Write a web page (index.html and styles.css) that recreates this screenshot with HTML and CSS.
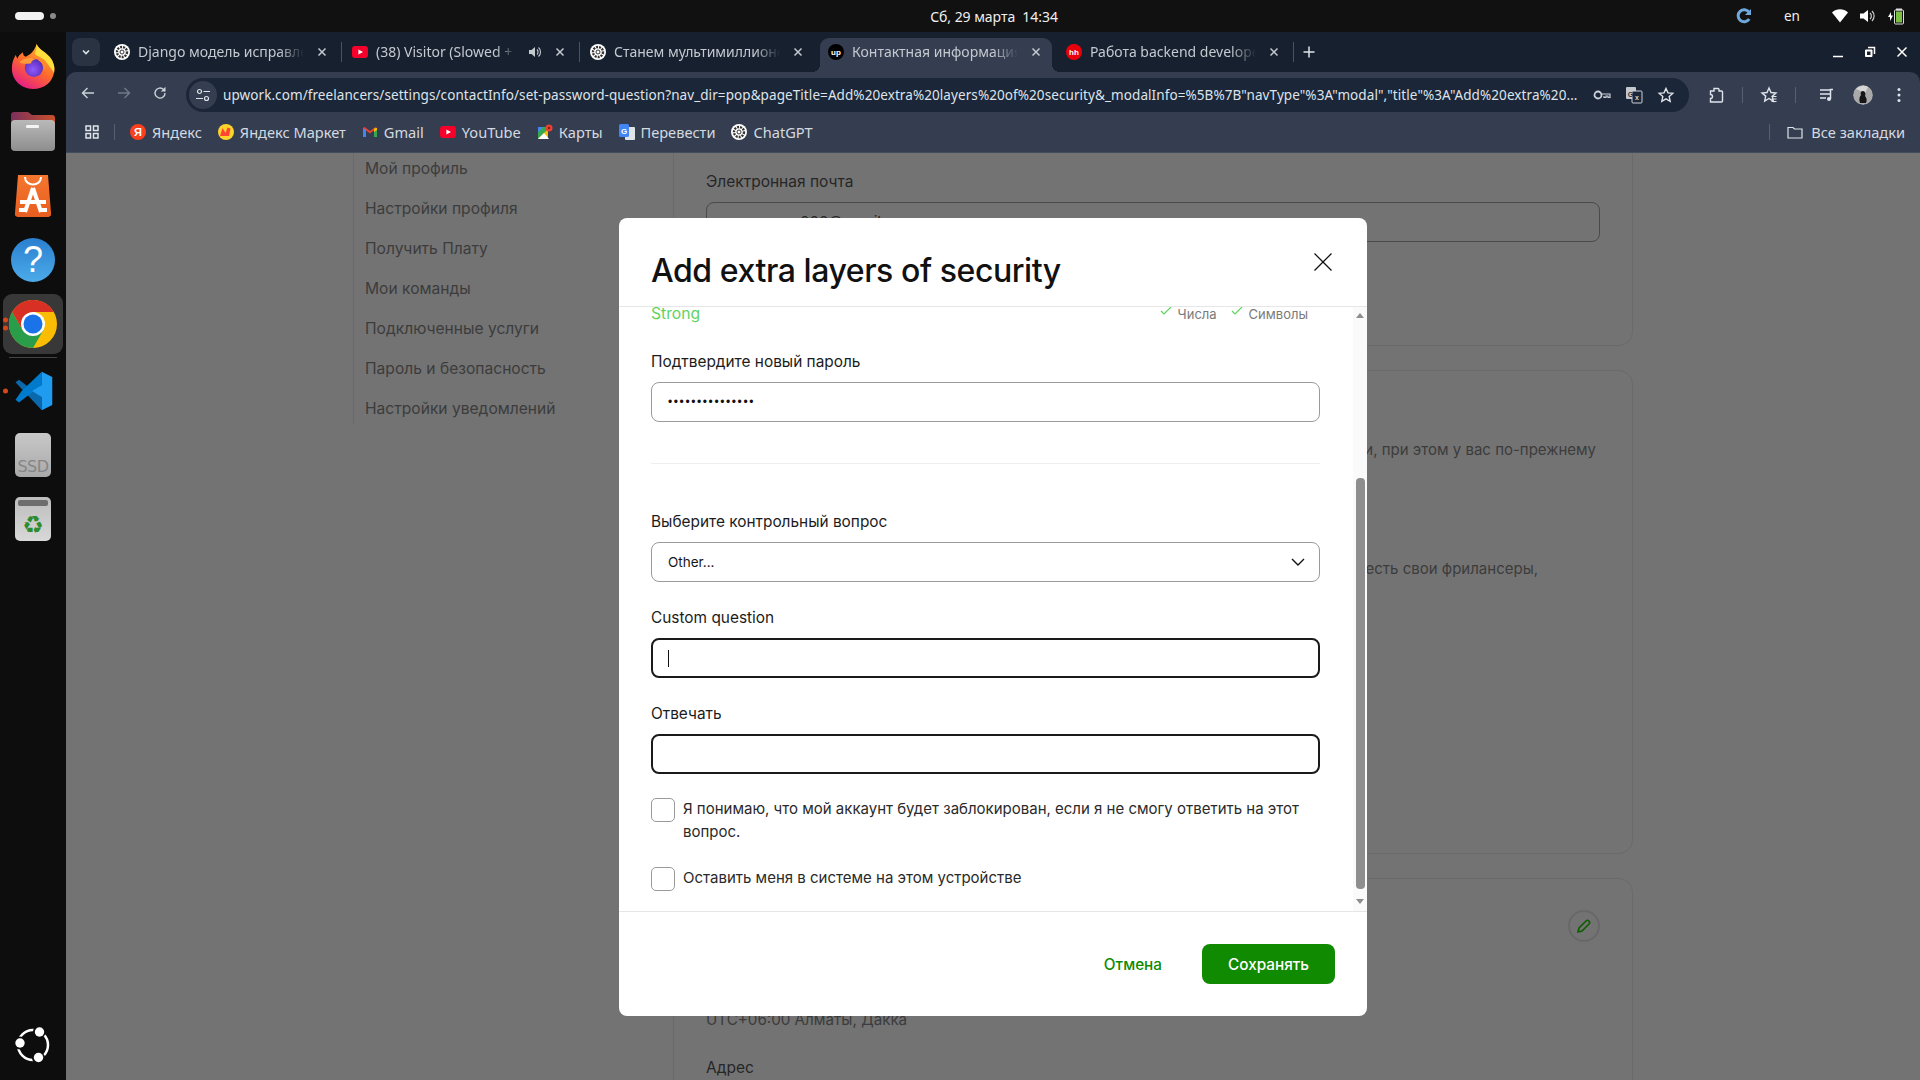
FILE: index.html
```html
<!DOCTYPE html>
<html lang="ru">
<head>
<meta charset="utf-8">
<title>Контактная информация</title>
<link rel="stylesheet" href="styles.css">
</head>
<body>
<svg class="sprite" aria-hidden="true">
  <defs>
    <symbol id="i-gpt" viewBox="0 0 16 16">
      <circle cx="8" cy="8" r="8" fill="#fff"/>
      <circle cx="8" cy="8" r="5" fill="none" stroke="#333" stroke-width="2.4" stroke-dasharray="2 1"/>
      <circle cx="8" cy="8" r="2" fill="none" stroke="#333" stroke-width="1"/>
    </symbol>
    <symbol id="i-yt" viewBox="0 0 16 16">
      <rect y="2" width="16" height="12" rx="3" fill="#f5002b"/>
      <path d="M6.4 5.4 11 8l-4.6 2.6z" fill="#fff"/>
    </symbol>
    <symbol id="i-x" viewBox="0 0 16 16">
      <path d="M4.5 4.5l7 7M11.5 4.5l-7 7" fill="none" stroke="currentColor" stroke-width="1.5"/>
    </symbol>
  </defs>
</svg>

<header class="topbar">
  <div class="tb-left"><span class="pill"></span><span class="pill-dot"></span></div>
  <div class="tb-clock">Сб, 29 марта&nbsp;&nbsp;14:34</div>
  <div class="tb-right">
    <svg class="tb-reload" width="16" height="16" viewBox="0 0 16 16"><path d="M13 4.2A6 6 0 1 0 13.2 11" fill="none" stroke="#6fa8dc" stroke-width="3"/><path d="M15 1v6H9z" fill="#6fa8dc"/></svg>
    <span class="tb-lang">en</span>
    <svg class="tb-wifi" width="16" height="14" viewBox="0 0 16 14"><path d="M0 3.500C4.500-.8 11.500-.8 16 3.500L8 13.500z" fill="#fff"/></svg>
    <svg class="tb-vol" width="16" height="14" viewBox="0 0 16 14"><path d="M0 4.500h3.500L8 1v12L3.500 9.500H0z" fill="#fff"/><path d="M10 4a4 4 0 0 1 0 6M12 2a7 7 0 0 1 0 10" fill="none" stroke="#ccc" stroke-width="1.200"/></svg>
    <svg class="tb-bat" width="16" height="18" viewBox="0 0 16 18"><path d="M0 10l3-5v3.500h2L2 14v-4z" fill="#fff"/><rect x="6.500" y="3" width="9" height="14" rx="1" fill="none" stroke="#ddd"/><rect x="8" y="1.500" width="6" height="2" fill="#ddd"/><rect x="8" y="4.500" width="6" height="11" fill="#7bc043"/></svg>
  </div>
</header>

<div class="desk">
  <nav class="dock">
    <div class="dock-item dock-first">
      <svg width="44" height="46" viewBox="0 0 48 50">
        <defs>
          <linearGradient id="ff1" x1="0.8" y1="0" x2="0.2" y2="1"><stop offset="0" stop-color="#ffc22e"/><stop offset=".5" stop-color="#ff6a2b"/><stop offset="1" stop-color="#e3158f"/></linearGradient>
          <radialGradient id="ff2" cx=".45" cy=".6" r=".6"><stop offset="0" stop-color="#8f5bff"/><stop offset="1" stop-color="#5b2bb8"/></radialGradient>
        </defs>
        <path d="M28 1c2 6 9 8 14 14 5 6 6 12 5 17-2 11-11 18-23 18C11 50 1 40 1 28c0-7 2-11 4-15l2 4c1-3 3-5 6-7 0 3 1 4 3 5 3-2 9-4 12-14z" fill="url(#ff1)"/>
        <path d="M28 1c2 6 9 8 14 14 5 6 6 12 5 17l-9-12c-3-4-9-5-12-8 1-3 2-7 2-11z" fill="#ffdd3a"/>
        <circle cx="25" cy="27" r="10" fill="url(#ff2)"/>
        <path d="M9 21c5-5 13-6 18-3-3 0-5 2-5 4-4 1-9 1-13-1z" fill="#ff9b3a"/>
        <path d="M32 16c4 3 6 8 5 14-1-5-3-9-7-11z" fill="#ff8a2c"/>
      </svg>
    </div>
    <div class="dock-item dock-files">
      <svg width="44" height="40" viewBox="0 0 44 40">
        <defs><linearGradient id="fo1" x1="0" y1="0" x2="1" y2="0"><stop offset="0" stop-color="#7a2f5c"/><stop offset="1" stop-color="#c9502a"/></linearGradient>
        <linearGradient id="fo2" x1="0" y1="0" x2="0" y2="1"><stop offset="0" stop-color="#b9b9b9"/><stop offset="1" stop-color="#8e8e8e"/></linearGradient></defs>
        <path d="M0 18V4a3 3 0 0 1 3-3h14l4 3h20a3 3 0 0 1 3 3v11z" fill="url(#fo1)"/>
        <rect y="9" width="44" height="31" rx="4" fill="url(#fo2)"/>
        <rect x="15" y="14" width="13" height="3" rx="1" fill="#f3f3f3"/>
      </svg>
    </div>
    <div class="dock-item">
      <svg width="36" height="42" viewBox="0 0 36 42">
        <defs><linearGradient id="ap1" x1="0" y1="0" x2="0" y2="1"><stop offset="0" stop-color="#f5772f"/><stop offset="1" stop-color="#e85d20"/></linearGradient></defs>
        <path d="M3 0h30l3 38a3 3 0 0 1-3 4H3a3 3 0 0 1-3-4z" fill="url(#ap1)"/>
        <path d="M10 2c0 10 16 10 16 0" fill="none" stroke="#fff" stroke-width="2"/>
        <path d="M18 13l8 24M18 13l-8 24M5 27h26M4 35h8M24 35h8" fill="none" stroke="#fff" stroke-width="4"/>
      </svg>
    </div>
    <div class="dock-item">
      <svg width="44" height="44" viewBox="0 0 44 44">
        <defs><linearGradient id="he1" x1="0" y1="0" x2="0" y2="1"><stop offset="0" stop-color="#2a7fcf"/><stop offset="1" stop-color="#4cabe9"/></linearGradient></defs>
        <circle cx="22" cy="22" r="22" fill="url(#he1)"/>
        <text x="22" y="34" class="help-q">?</text>
      </svg>
    </div>
    <div class="dock-item dock-active">
      <span class="run-dots"><i></i><i></i></span>
      <svg width="48" height="48" viewBox="0 0 48 48">
        <circle cx="24" cy="24" r="24" fill="#fbbc04"/>
        <path d="M3.200 12A24 24 0 0 0 24 48L34.400 30H13.600z" fill="#2a9d4b"/>
        <path d="M3.200 12A24 24 0 0 1 44.800 12H24L13.600 30z" fill="#d93025"/>
        <circle cx="24" cy="24" r="12" fill="#fff"/>
        <circle cx="24" cy="24" r="9.500" fill="#1a73e8"/>
      </svg>
    </div>
    <div class="dock-sep"></div>
    <div class="dock-item">
      <span class="run-dots"><i></i></span>
      <svg width="42" height="42" viewBox="0 0 48 48">
        <path d="M4 14l4-3 26 20v15z" fill="#0a68ad"/>
        <path d="M34 2 11 24 4 34l4 3 26-20z" fill="#007acc"/>
        <path d="M34 2l12 6v32l-12 6V31l-11-7 11-7z" fill="#1f9cf0"/>
      </svg>
    </div>
    <div class="dock-item">
      <div class="ssd">SSD</div>
    </div>
    <div class="dock-item">
      <div class="trash"><span class="trash-lid"></span><span class="trash-sign">♻</span></div>
    </div>
    <div class="dock-ubuntu">
      <svg width="36" height="36" viewBox="0 0 36 36">
        <circle cx="18" cy="18" r="15" fill="none" stroke="#fff" stroke-width="2.500"/>
        <circle cx="24.500" cy="4.500" r="6.500" fill="#0d0d0d"/><circle cx="5" cy="16" r="6.500" fill="#0d0d0d"/><circle cx="23.500" cy="31" r="6.500" fill="#0d0d0d"/>
        <circle cx="24.500" cy="5" r="4.700" fill="#fff"/><circle cx="5" cy="16" r="4.700" fill="#fff"/><circle cx="23.500" cy="30.500" r="4.700" fill="#fff"/>
      </svg>
    </div>
  </nav>

  <div class="browser">
    <div class="tabstrip">
      <button class="tab-menu"><svg width="12" height="12" viewBox="0 0 12 12"><path d="M3 4.500l3 3 3-3" fill="none" stroke="#dfe3ea" stroke-width="1.600"/></svg></button>
      <div class="tab"><svg class="fav"><use href="#i-gpt"/></svg><span class="tab-title">Django модель исправление</span><svg class="tab-x"><use href="#i-x"/></svg></div>
      <i class="tab-sep"></i>
      <div class="tab"><svg class="fav"><use href="#i-yt"/></svg><span class="tab-title">(38) Visitor (Slowed + Reverb)</span>
        <svg class="tab-audio" viewBox="0 0 16 16"><path d="M2 6h2.500L8 3v10L4.500 10H2z" fill="#c5c9d0"/><path d="M10 5.500a3.500 3.500 0 0 1 0 5M11.500 3.500a6 6 0 0 1 0 9" fill="none" stroke="#c5c9d0" stroke-width="1.100"/></svg>
        <svg class="tab-x"><use href="#i-x"/></svg></div>
      <i class="tab-sep"></i>
      <div class="tab"><svg class="fav"><use href="#i-gpt"/></svg><span class="tab-title">Станем мультимиллионерами</span><svg class="tab-x"><use href="#i-x"/></svg></div>
      <i class="tab-sep tab-sep-off"></i>
      <div class="tab tab-active"><svg class="fav" viewBox="0 0 16 16"><circle cx="8" cy="8" r="8" fill="#000"/><text x="8" y="10.500" class="fav-up">up</text></svg><span class="tab-title">Контактная информация</span><svg class="tab-x"><use href="#i-x"/></svg></div>
      <i class="tab-sep tab-sep-off"></i>
      <div class="tab"><svg class="fav" viewBox="0 0 16 16"><circle cx="8" cy="8" r="8" fill="#e8000d"/><text x="8" y="10.800" class="fav-hh">hh</text></svg><span class="tab-title">Работа backend developer</span><svg class="tab-x"><use href="#i-x"/></svg></div>
      <i class="tab-sep"></i>
      <svg class="tab-plus" viewBox="0 0 16 16"><path d="M8 2.500v11M2.500 8h11" stroke="#dfe3ea" stroke-width="1.500"/></svg>
      <div class="win-ctrls">
        <svg viewBox="0 0 12 12"><path d="M1 10.500h10" stroke="#fff" stroke-width="1.500"/></svg>
        <svg viewBox="0 0 12 12"><path d="M1.500 4h6.500v6.500H1.500z" fill="#fff" stroke="#fff" stroke-width="1"/><rect x="3" y="5.500" width="3.500" height="3.500" fill="#17202f"/><path d="M4 1.500h6.500V8" fill="none" stroke="#fff" stroke-width="1.500"/></svg>
        <svg viewBox="0 0 12 12"><path d="M1.500 1.500l9 9M10.500 1.500l-9 9" stroke="#fff" stroke-width="1.500"/></svg>
      </div>
    </div>

    <div class="toolbar">
      <svg class="nav-ic" viewBox="0 0 16 16"><path d="M14 8H2.500M7.500 3l-5 5 5 5" fill="none" stroke="#ccd1d9" stroke-width="1.400"/></svg>
      <svg class="nav-ic" viewBox="0 0 16 16"><path d="M2 8h11.500M8.500 3l5 5-5 5" fill="none" stroke="#727a88" stroke-width="1.400"/></svg>
      <svg class="nav-ic" viewBox="0 0 16 16"><path d="M13 8a5 5 0 1 1-1.500-3.500L13 6" fill="none" stroke="#ccd1d9" stroke-width="1.400"/><path d="M13.500 1.800v4.700H8.800z" fill="#ccd1d9"/></svg>
      <div class="omnibox">
        <span class="site-chip"><svg width="16" height="16" viewBox="0 0 16 16"><circle cx="4.500" cy="4.500" r="2" fill="none" stroke="#dfe3ea" stroke-width="1.200"/><path d="M8.500 4.500H15M1 11.500h7" stroke="#dfe3ea" stroke-width="1.200"/><circle cx="11.500" cy="11.500" r="2" fill="none" stroke="#dfe3ea" stroke-width="1.200"/></svg></span>
        <span class="url">upwork.com/freelancers/settings/contactInfo/set-password-question?nav_dir=pop&amp;pageTitle=Add%20extra%20layers%20of%20security&amp;_modalInfo=%5B%7B"navType"%3A"modal","title"%3A"Add%20extra%20...</span>
        <svg class="omni-ic" viewBox="0 0 18 16"><circle cx="5" cy="8" r="3.500" fill="none" stroke="#ccd1d9" stroke-width="1.800"/><path d="M8.500 7H17v3.500h-2V9h-2v1.500h-2V9" fill="none" stroke="#ccd1d9" stroke-width="1.200"/></svg>
        <svg class="omni-ic" viewBox="0 0 18 18"><rect x="1" y="1" width="10" height="12" rx="1" fill="#c3c7ce"/><rect x="7" y="5" width="10" height="12" rx="1" fill="#1b2638" stroke="#ccd1d9"/><text x="5.500" y="10.500" class="tr-g">G</text><text x="12" y="14" class="tr-x">x</text></svg>
        <svg class="omni-ic" viewBox="0 0 18 18"><path d="M9 2.500l2 4.400 4.800.5-3.600 3.200 1 4.700L9 12.900l-4.200 2.400 1-4.700L2.200 7.400 7 6.900z" fill="none" stroke="#dfe3ea" stroke-width="1.400"/></svg>
      </div>
      <div class="tools">
        <svg class="tool-ic" viewBox="0 0 18 18"><path d="M7 2.500h4a1 1 0 0 1 1 1V5h2.500a1 1 0 0 1 1 1v9a1 1 0 0 1-1 1H3.500v-3.500a2 2 0 0 0 0-4V5H7z" fill="none" stroke="#dfe3ea" stroke-width="1.400"/></svg>
        <i class="tool-sep"></i>
        <svg class="tool-ic" viewBox="0 0 18 18"><path d="M9 2l2 4.500 5 .5-3.700 3.300 1 4.900L9 12.500 4.700 15l1-4.900L2 7l5-.5z" fill="none" stroke="#dfe3ea" stroke-width="1.400"/><path d="M11.500 10.500h5M11.500 13h5M11.500 15.500h5" stroke="#dfe3ea" stroke-width="1.100"/></svg>
        <i class="tool-sep"></i>
        <svg class="tool-ic tool-music" viewBox="0 0 18 18"><path d="M2 4h10M2 8h10M2 12h6" stroke="#dfe3ea" stroke-width="1.400"/><path d="M15 3.500h-2.500V13" fill="none" stroke="#dfe3ea" stroke-width="1.500"/><circle cx="11" cy="13" r="2" fill="#dfe3ea"/></svg>
        <svg class="avatar" viewBox="0 0 20 20"><circle cx="10" cy="10" r="10" fill="#a9a9a9"/><path d="M3 4a10 10 0 0 1 12-2L12 8z" fill="#d6d6d6"/><path d="M7 18c-1-3-1-6 1-8-1-2 0-4 2-4s3 3 2 5c2 2 2 5 1 7z" fill="#161616"/></svg>
        <svg class="tool-ic tool-more" viewBox="0 0 18 18"><circle cx="9" cy="3.500" r="1.500" fill="#dfe3ea"/><circle cx="9" cy="9" r="1.500" fill="#dfe3ea"/><circle cx="9" cy="14.500" r="1.500" fill="#dfe3ea"/></svg>
      </div>
    </div>

    <div class="bookmarks">
      <svg class="bm-grid" viewBox="0 0 16 16"><path d="M2 2h4.500v4.500H2zM9.500 2H14v4.500H9.500zM2 9.500h4.500V14H2zM9.500 9.500H14V14H9.500z" fill="none" stroke="#dfe3ea" stroke-width="1.500"/></svg>
      <i class="bm-sep"></i>
      <div class="bm"><svg class="fav" viewBox="0 0 16 16"><circle cx="8" cy="8" r="8" fill="#fc3f1d"/><text x="8" y="12" class="fav-ya">Я</text></svg><span>Яндекс</span></div>
      <div class="bm"><svg class="fav" viewBox="0 0 16 16"><circle cx="8" cy="8" r="8" fill="#fed42b"/><path d="M2 12 4.500 4l3 5 2-5.500 3 1L11 12z" fill="#f43"/></svg><span>Яндекс Маркет</span></div>
      <div class="bm"><svg class="fav" viewBox="0 0 16 16"><path d="M1 13V4l3 .5V13z" fill="#4285f4"/><path d="M12 13V4.500l3-.5v9z" fill="#34a853"/><path d="M1 4l7 5.500L15 4l-1.500-1L8 7 2.500 3z" fill="#ea4335"/><path d="M12 4.500 15 4v2l-3 2z" fill="#fbbc04"/></svg><span>Gmail</span></div>
      <div class="bm"><svg class="fav"><use href="#i-yt"/></svg><span>YouTube</span></div>
      <div class="bm"><svg class="fav" viewBox="0 0 16 16"><path d="M1 3h10v12H1z" fill="#34a853"/><path d="M1 15 11 5v10z" fill="#fbbc04"/><path d="M1 15 7 9l5 6z" fill="#fff"/><path d="M1 3h5L1 8z" fill="#4285f4"/><circle cx="12" cy="4" r="3.500" fill="#ea4335"/><circle cx="12" cy="4" r="1.200" fill="#8c1b12"/></svg><span>Карты</span></div>
      <div class="bm"><svg class="fav" viewBox="0 0 16 16"><rect x="6" y="3" width="10" height="13" rx="1" fill="#dfe3ea"/><rect width="10" height="13" rx="1.500" fill="#4285f4"/><text x="5" y="10" class="fav-g">G</text></svg><span>Перевести</span></div>
      <div class="bm"><svg class="fav"><use href="#i-gpt"/></svg><span>ChatGPT</span></div>
      <div class="bm-all">
        <i class="bm-sep"></i>
        <svg class="fav" viewBox="0 0 16 16"><path d="M1 3.500h5l1.500 1.500H15v9H1z" fill="none" stroke="#dfe3ea" stroke-width="1.200"/></svg>
        <span>Все закладки</span>
      </div>
    </div>

    <main class="page">
      <aside class="side">
        <ul class="side-list">
          <li>Мой профиль</li>
          <li>Настройки профиля</li>
          <li>Получить Плату</li>
          <li>Мои команды</li>
          <li>Подключенные услуги</li>
          <li>Пароль и безопасность</li>
          <li>Настройки уведомлений</li>
        </ul>
      </aside>
      <section class="cards">
        <div class="card card-one">
          <div class="c-label">Электронная почта</div>
          <div class="c-input">000@gmail</div>
        </div>
        <div class="card card-two">
          <p class="c-line c-line-a">и, при этом у вас по-прежнему</p>
          <p class="c-line c-line-b">есть свои фрилансеры,</p>
        </div>
        <div class="card card-three">
          <div class="c-edit"><span class="edit-btn"><svg width="16" height="16" viewBox="0 0 16 16"><path d="M2 14l1-4 7-7a1.800 1.800 0 0 1 3 3l-7 7z" fill="none" stroke="#0f5c00" stroke-width="1.600"/></svg></span></div>
          <div class="c-text">UTC+06:00 Алматы, Дакка</div>
          <div class="c-label c-addr">Адрес</div>
        </div>
      </section>

      <div class="modal">
        <div class="m-head">
          <h1 class="m-title">Add extra layers of security</h1>
          <svg class="m-close" width="20" height="20" viewBox="0 0 20 20"><path d="M1.500 1.500l17 17M18.500 1.500l-17 17" stroke="#111" stroke-width="1.300"/></svg>
        </div>
        <div class="m-body">
          <div class="m-content">
            <div class="strength">
              <span class="strong">Strong</span>
              <span class="rule"><svg class="tick" width="12" height="10" viewBox="0 0 12 10"><path d="M1 5l3 3 7-7" fill="none" stroke="#5fd35f" stroke-width="1.200"/></svg>Числа</span>
              <span class="rule"><svg class="tick" width="12" height="10" viewBox="0 0 12 10"><path d="M1 5l3 3 7-7" fill="none" stroke="#5fd35f" stroke-width="1.200"/></svg>Символы</span>
            </div>
            <label class="f-label f-first">Подтвердите новый пароль</label>
            <div class="field"><span class="dots">•••••••••••••••</span></div>
            <hr class="divider">
            <label class="f-label f-sec">Выберите контрольный вопрос</label>
            <div class="field field-select"><span class="f-value">Other...</span><svg width="14" height="8" viewBox="0 0 14 8"><path d="M1 1l6 6 6-6" fill="none" stroke="#111" stroke-width="1.400"/></svg></div>
            <label class="f-label">Custom question</label>
            <div class="field field-focus"><span class="caret"></span></div>
            <label class="f-label">Отвечать</label>
            <div class="field field-focus"></div>
            <div class="check check-first"><span class="box"></span><span class="check-text">Я понимаю, что мой аккаунт будет заблокирован, если я не смогу ответить на этот вопрос.</span></div>
            <div class="check"><span class="box"></span><span class="check-text">Оставить меня в системе на этом устройстве</span></div>
          </div>
          <div class="scrollbar">
            <span class="arrow arrow-up"></span>
            <span class="thumb"></span>
            <span class="arrow arrow-down"></span>
          </div>
        </div>
        <div class="m-foot">
          <span class="btn-link">Отмена</span>
          <span class="btn-primary">Сохранять</span>
        </div>
      </div>
    </main>
  </div>
</div>
</body>
</html>
```
FILE: styles.css
```css
* { box-sizing: border-box; }
html, body { margin: 0; height: 100%; }
body {
  width: 1920px; height: 1080px; overflow: hidden; background: #111;
  display: flex; flex-direction: column;
  font-family: "Noto Sans", sans-serif;
}
.sprite { position: absolute; width: 0; height: 0; }
i { font-style: normal; display: block; }

/* top bar */
.topbar { height: 32px; background: #111; display: grid; grid-template-columns: 1fr auto 1fr; align-items: center; color: #eee; flex: none; }
.tb-left { display: flex; align-items: center; padding-left: 15px; gap: 6px; }
.pill { width: 29px; height: 8px; border-radius: 4px; background: #f2f2f2; }
.pill-dot { width: 6px; height: 6px; border-radius: 50%; background: #8a8a8a; }
.tb-clock { font-size: 14px; letter-spacing: -.05px; margin-left: 68px; }
.tb-right { display: flex; align-items: center; justify-content: flex-end; padding-right: 16px; }
.tb-lang { font-size: 13.5px; margin-left: 32px; width: 16px; }
.tb-wifi { margin-left: 32px; }
.tb-vol { margin-left: 12px; }
.tb-bat { margin-left: 12px; }

.desk { flex: 1; display: flex; min-height: 0; }

/* dock */
.dock { width: 66px; flex: none; background: #0d0d0d; display: flex; flex-direction: column; align-items: center; padding-top: 3px; }
.dock-item { width: 60px; height: 64px; display: flex; align-items: center; justify-content: center; position: relative; flex: none; }
.dock-first { height: 65px; }
.dock-first svg { margin-top: -3px; }
.dock-files svg { margin-top: -2px; }
.dock-active { background: #383838; border-radius: 9px; height: 60px; margin: 2px 0; }
.dock-sep { width: 48px; height: 1px; background: #444; margin: 1px 0; flex: none; }
.run-dots { position: absolute; left: 0; top: 50%; transform: translateY(-50%); display: flex; flex-direction: column; gap: 3px; }
.run-dots i { width: 5px; height: 5px; border-radius: 50%; background: #d5481a; }
.help-q { font: 400 36px "Liberation Sans", sans-serif; fill: #fff; text-anchor: middle; }
.ssd { width: 36px; height: 44px; border-radius: 5px; background: linear-gradient(#c8c8c8, #a9a9a9); color: #868686; font: 400 16px "DejaVu Sans", sans-serif; display: flex; align-items: flex-end; justify-content: center; padding-bottom: 1px; letter-spacing: -.5px; }
.trash { width: 36px; height: 44px; border-radius: 5px; background: linear-gradient(#bdbdbd, #d8d8d8); display: flex; flex-direction: column; align-items: center; padding-top: 3px; }
.trash-lid { width: 30px; height: 6px; background: #6d6d6d; border-radius: 2px; }
.trash-sign { color: #2e8b2e; font: 24px/28px "DejaVu Sans", sans-serif; margin-top: 5px; }
.dock-ubuntu { margin-top: auto; margin-bottom: 17px; height: 36px; }

/* browser chrome */
.browser { flex: 1; min-width: 0; display: flex; flex-direction: column; background: #17202f; }
.tabstrip { height: 40px; flex: none; display: flex; align-items: flex-start; padding: 6px 0 0 6px; color: #c5c9d0; }
.tab-menu { width: 28px; height: 28px; margin-right: 6px; border: 0; padding: 0; border-radius: 8px; background: #2a3342; display: flex; align-items: center; justify-content: center; }
.tab { width: 232px; height: 34px; display: flex; align-items: center; padding: 0 8px 6px; font-size: 14px; position: relative; flex: none; }
.tab-active { background: #343e50; border-radius: 9px 9px 0 0; }
.tab-active::before, .tab-active::after { content: ""; position: absolute; bottom: 0; width: 8px; height: 8px; }
.tab-active::before { left: -8px; background: radial-gradient(circle at 0 0, transparent 8px, #343e50 8px); }
.tab-active::after { right: -8px; background: radial-gradient(circle at 100% 0, transparent 8px, #343e50 8px); }
.fav { width: 16px; height: 16px; flex: none; }
.tab-title { flex: 1; min-width: 0; margin: -2px 10px 0 8px; white-space: nowrap; overflow: hidden; -webkit-mask-image: linear-gradient(90deg, #000 85%, transparent); mask-image: linear-gradient(90deg, #000 85%, transparent); }
.tab-x { width: 16px; height: 16px; flex: none; }
.tab-audio { width: 16px; height: 16px; flex: none; margin-right: 9px; }
.tab-sep { width: 1px; height: 20px; background: #4a5364; margin: 4px 2.5px 0; flex: none; }
.tab-sep-off { background: transparent; }
.tab-plus { width: 16px; height: 16px; margin: 6px 0 0 5px; flex: none; }
.win-ctrls { margin-left: auto; display: flex; gap: 20px; padding: 8px 12px 0 0; }
.win-ctrls svg { width: 12px; height: 12px; }
.fav-up { font: 700 8px "Liberation Sans", sans-serif; fill: #fff; text-anchor: middle; }
.fav-hh { font: 700 8px "Liberation Sans", sans-serif; fill: #fff; text-anchor: middle; }
.fav-ya { font: 700 11px "Liberation Sans", sans-serif; fill: #fff; text-anchor: middle; }
.fav-g { font: 700 8px "Liberation Sans", sans-serif; fill: #fff; text-anchor: middle; }
.tr-g { font: 700 7px "Liberation Sans", sans-serif; fill: #333; text-anchor: middle; }
.tr-x { font: 700 7px "Liberation Sans", sans-serif; fill: #ccd1d9; text-anchor: middle; }

.toolbar { height: 41px; flex: none; background: #343e50; border-radius: 10px 10px 0 0; display: flex; align-items: center; padding: 0 0 0 14px; }
.nav-ic { width: 16px; height: 16px; margin-right: 20px; flex: none; }
.nav-ic:nth-child(3) { margin-right: 18px; }
.omnibox { width: 1503px; height: 34px; margin: 4px 0 0 0; border-radius: 17px; background: #1b2638; display: flex; align-items: center; padding-left: 3px; flex: none; }
.site-chip { width: 28px; height: 28px; border-radius: 50%; background: #343e50; display: flex; align-items: center; justify-content: center; flex: none; }
.url { margin-left: 6px; width: 1355px; font-size: 13.5px; color: #dfe3ea; white-space: nowrap; overflow: hidden; flex: none; letter-spacing: .08px; }
.omni-ic { width: 18px; height: 18px; flex: none; margin-left: 14px; }
.url + .omni-ic { margin-left: 15px; }
.tools { display: flex; align-items: center; margin-top: 4px; margin-left: 18px; }
.tool-ic { width: 18px; height: 18px; flex: none; }
.tool-sep { width: 1px; height: 16px; background: #566072; margin: 0 17px; flex: none; }
.tool-music { margin-left: 5px; }
.avatar { width: 20px; height: 20px; border-radius: 50%; margin-left: 17px; flex: none; }
.tool-more { margin-left: 17px; }

.bookmarks { height: 40px; flex: none; background: #343e50; border-bottom: 1px solid #424c60; display: flex; align-items: center; padding: 0 0 2px 18px; color: #d5d9e0; font-size: 14.6px; }
.bm-grid { width: 16px; height: 16px; flex: none; }
.bm-sep { width: 1px; height: 16px; background: #566072; margin: 0 15px 0 14px; flex: none; }
.bm { display: flex; align-items: center; gap: 6px; margin-right: 16px; white-space: nowrap; }
.bm-all { margin-left: auto; display: flex; align-items: center; gap: 8px; padding-right: 15px; white-space: nowrap; }
.bm-all .bm-sep { margin: 0 9px 0 0; }

/* page behind the dialog */
.page { flex: 1; min-height: 0; background: #737373; position: relative; overflow: hidden; display: flex; padding-left: 287px; font-family: Inter, "Liberation Sans", sans-serif; color: #3c3c3c; }
.side { width: 320px; height: 272px; border-left: 1px solid #6a6a6a; padding-left: 11px; flex: none; }
.side-list { list-style: none; margin: -4px 0 0; padding: 0; font-size: 15.6px; }
.side-list li { height: 40px; line-height: 40px; white-space: nowrap; }
.cards { width: 960px; display: flex; flex-direction: column; gap: 24px; flex: none; }
.card { border: 1px solid #6a6a6a; border-radius: 14px; padding: 0 32px; flex: none; }
.card-one { height: 253px; margin-top: -60px; padding-top: 76px; }
.c-label { font-size: 15.5px; line-height: 24px; color: #262626; }
.c-input { height: 40px; margin-top: 8px; border: 1px solid #4a4a4a; border-radius: 8px; padding: 7px 0 0 93px; color: #262626; font-size: 15px; line-height: 24px; }
.card-two { height: 484px; padding-top: 67px; }
.c-line { margin: 0; font-size: 15px; line-height: 24px; text-align: right; white-space: nowrap; }
.c-line-a { padding-right: 4px; }
.c-line-b { margin-top: 95px; padding-right: 62px; }
.card-three { height: 300px; padding-top: 31px; }
.c-edit { display: flex; justify-content: flex-end; }
.edit-btn { width: 32px; height: 32px; border-radius: 50%; border: 2px solid #686868; display: flex; align-items: center; justify-content: center; }
.c-text { margin-top: 66px; font-size: 15.2px; line-height: 24px; }
.c-addr { margin-top: 24px; }

/* dialog */
.modal { position: absolute; left: 553px; top: 65px; width: 748px; height: 798px; background: #fff; border-radius: 8px; display: flex; flex-direction: column; color: #181818; overflow: hidden; font-family: Inter, "Liberation Sans", sans-serif; }
.m-head { height: 89px; flex: none; border-bottom: 1px solid #e6e6e6; display: flex; justify-content: space-between; align-items: flex-start; padding: 33px 34px 0 32px; }
.m-title { margin: 0; font-size: 32px; line-height: 40px; font-weight: 500; letter-spacing: -.43px; color: #111; }
.m-close { margin-top: 1px; }
.m-body { flex: 1; min-height: 0; position: relative; overflow: hidden; }
.m-content { padding: 0 47px 0 32px; width: 748px; }
.strength { height: 15px; padding-bottom: 2px; display: flex; align-items: center; font-size: 13px; color: #7a7a7a; }
.strong { color: #5fd35f; font-size: 15.7px; margin-right: auto; }
.rule { display: flex; align-items: center; margin-right: 14px; margin-top: 1px; }
.rule:last-child { margin-right: 12px; }
.tick { margin-right: 6px; margin-top: -6px; }
.f-label { display: block; font-size: 15.4px; line-height: 24px; margin-top: 24px; color: #1c1c1c; }
.f-first { margin-top: 28px; }
.f-sec { margin-top: 46px; }
.field { height: 40px; margin-top: 8px; border: 1px solid #9a9a9a; border-radius: 8px; padding: 0 16px; display: flex; align-items: center; }
.field-select { justify-content: space-between; }
.field-select svg { margin-right: -2px; }
.field-focus { border: 2px solid #1a1a1a; padding: 0 15px; }
.f-value { font-size: 13.5px; }
.dots { font: 12px "Liberation Sans", sans-serif; letter-spacing: 1.6px; color: #111; }
.caret { width: 1px; height: 17px; background: #111; }
.divider { border: 0; height: 1px; background: #eee; margin: 41px 0 0; }
.check { display: flex; gap: 8px; margin-top: 24px; font-size: 15px; line-height: 23px; }
.box { width: 24px; height: 24px; border: 1px solid #9a9a9a; border-radius: 5px; flex: none; }
.check-text { color: #2a2a2a; margin-top: -1px; }
.scrollbar { position: absolute; right: 0; top: 0; bottom: 0; width: 14px; background: #fafafa; display: flex; flex-direction: column; align-items: center; padding-top: 6px; }
.arrow { width: 0; height: 0; border-left: 4px solid transparent; border-right: 4px solid transparent; flex: none; }
.arrow-up { border-bottom: 5px solid #8e8e8e; }
.arrow-down { border-top: 5px solid #8e8e8e; margin-top: 10px; }
.thumb { width: 9px; height: 411px; background: #8e8e8e; border-radius: 4px; margin-top: 160px; flex: none; }
.m-foot { height: 105px; flex: none; border-top: 1px solid #e6e6e6; display: flex; justify-content: flex-end; align-items: center; gap: 40px; padding: 0 32px; font-size: 15.3px; }
.btn-link { color: #108a00; font-weight: 500; }
.btn-primary { width: 133px; height: 40px; border-radius: 8px; background: #108a00; color: #fff; font-weight: 500; display: flex; align-items: center; justify-content: center; }
```
